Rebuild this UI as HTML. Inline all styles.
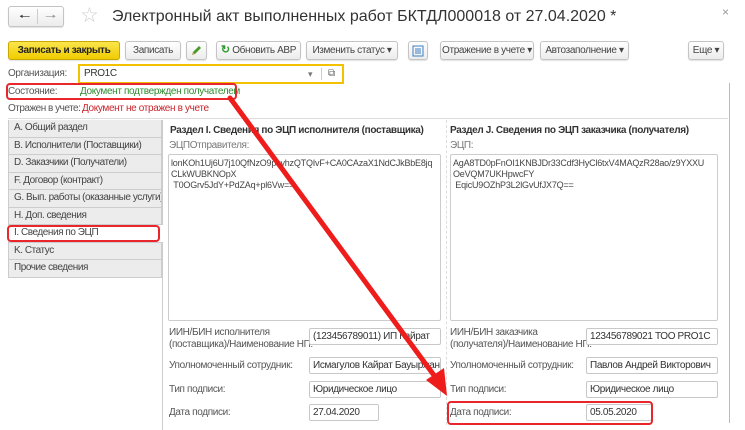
<!DOCTYPE html>
<html><head><meta charset="utf-8"><style>
*{box-sizing:border-box;margin:0;padding:0}
body{width:745px;height:430px;background:#fff;font-family:"Liberation Sans",Arial,sans-serif;font-size:10px;letter-spacing:-0.35px;color:#444;position:relative;overflow:hidden}
.a{position:absolute;white-space:nowrap}
.btn{position:absolute;height:19px;border:1px solid #c4c4c4;border-radius:3px;background:linear-gradient(#fff,#ececec);font-size:10px;color:#444;line-height:17px;text-align:center;white-space:nowrap;box-shadow:0 1px 1px rgba(0,0,0,.12)}
.tab{position:absolute;left:8px;width:154px;height:17.5px;border:1px solid #ccc;border-top:none;background:#ececec;padding-left:5px;line-height:16px;color:#444;white-space:nowrap;letter-spacing:-0.45px;overflow:hidden}
.fld{position:absolute;height:17px;border:1px solid #c8c8c8;border-radius:2px;background:#fff;padding-left:3px;line-height:15px;color:#333;overflow:hidden;white-space:nowrap}
.lbl{position:absolute;color:#555;white-space:nowrap}
.ta{position:absolute;border:1px solid #ccc;border-radius:2px;padding:3px 2px;line-height:11px;color:#444;font-size:9px;letter-spacing:-0.2px;white-space:nowrap;overflow:hidden}
</style></head><body>
<div class="btn" style="left:8px;top:6px;width:56px;height:21px;line-height:19px"><span style="position:absolute;left:10px;font-size:13px;color:#333">&#129040;</span><span style="position:absolute;left:28px;top:2px;width:1px;height:15px;background:#ccc"></span><span style="position:absolute;left:36px;font-size:13px;color:#999">&#129042;</span></div>
<div class="a" style="left:80px;top:3px;font-size:21px;color:#ccc">☆</div>
<div class="a" style="left:112px;top:8px;font-size:16px;letter-spacing:0;color:#333">Электронный акт выполненных работ БКТДЛ000018 от 27.04.2020 *</div>
<div class="a" style="left:722px;top:5px;font-size:12px;color:#999">×</div>
<div class="btn" style="left:8px;top:41px;width:112px;background:linear-gradient(#fbe54c,#f0cc00);border-color:#c9a800;color:#222;font-weight:bold">Записать и закрыть</div>
<div class="btn" style="left:125px;top:41px;width:56px">Записать</div>
<div class="btn" style="left:186px;top:41px;width:21px"><svg width="13" height="13" viewBox="0 0 13 13" style="margin-top:2px"><path d="M2 11l1-3 6-6 2 2-6 6z" fill="#4a9a2a"/><path d="M2 11l1-3 2 2z" fill="#c9a26a"/></svg></div>
<div class="btn" style="left:216px;top:41px;width:85px"><span style="color:#2c9a2c;font-weight:bold;font-size:11px">↻</span> Обновить АВР</div>
<div class="btn" style="left:306px;top:41px;width:92px">Изменить статус ▾</div>
<div class="btn" style="left:408px;top:41px;width:20px"><svg width="12" height="12" viewBox="0 0 12 12" style="margin-top:3px"><rect x="1" y="1" width="10" height="10" fill="none" stroke="#3c7fc4"/><path d="M3 4h6M3 6h6M3 8h6" stroke="#3c7fc4"/></svg></div>
<div class="btn" style="left:440px;top:41px;width:94px">Отражение в учете ▾</div>
<div class="btn" style="left:540px;top:41px;width:89px">Автозаполнение ▾</div>
<div class="btn" style="left:688px;top:41px;width:36px">Еще ▾</div>
<div class="lbl" style="left:8px;top:68px">Организация:</div>
<div class="a" style="left:78px;top:64px;width:266px;height:20px;border:2px solid #f2c200;background:#fff;padding-left:4px;line-height:16px;color:#333">PRO1C<span style="position:absolute;left:228px;top:0;color:#777;font-size:9px">▾</span><span style="position:absolute;left:241px;top:2px;width:1px;height:12px;background:#ccc"></span><span style="position:absolute;left:248px;top:0;color:#666;font-size:10px">⧉</span></div>
<div class="lbl" style="left:8px;top:86px">Состояние:</div>
<div class="a" style="left:80px;top:86px;color:#2e8b2e">Документ подтвержден получателем</div>
<div class="a" style="left:6px;top:83px;width:231px;height:17px;border:2px solid #e8262b;border-radius:4px"></div>
<div class="lbl" style="left:8px;top:103px;letter-spacing:-0.5px">Отражен в учете:</div>
<div class="a" style="left:82px;top:103px;color:#c8242b">Документ не отражен в учете</div>
<div class="a" style="left:8px;top:118px;width:720px;height:1px;background:#ddd"></div>
<div class="a" style="left:729px;top:83px;width:1px;height:340px;background:#bbb"></div>
<div class="a" style="left:8px;top:120px;width:154px;height:1px;background:#ccc"></div>
<div class="tab" style="top:120px">А. Общий раздел</div>
<div class="tab" style="top:137.5px">В. Исполнители (Поставщики)</div>
<div class="tab" style="top:155px">D. Заказчики (Получатели)</div>
<div class="tab" style="top:172.5px">F. Договор (контракт)</div>
<div class="tab" style="top:190px">G. Вып. работы (оказанные услуги)</div>
<div class="tab" style="top:207.5px">H. Доп. сведения</div>
<div class="tab" style="top:225px;background:#fff;border-right:none">I. Сведения по ЭЦП</div>
<div class="tab" style="top:242.5px">K. Статус</div>
<div class="tab" style="top:260px">Прочие сведения</div>
<div class="a" style="left:7px;top:225px;width:153px;height:17px;border:2px solid #e8262b;border-radius:4px"></div>
<div class="a" style="left:162px;top:120px;width:1px;height:105px;background:#ccc"></div>
<div class="a" style="left:162px;top:242px;width:1px;height:188px;background:#ccc"></div>
<div class="a" style="left:446px;top:120px;width:0;height:305px;border-left:1px dashed #ddd"></div>
<div class="a" style="left:170px;top:125px;font-weight:bold;color:#333">Раздел I. Сведения по ЭЦП исполнителя (поставщика)</div>
<div class="lbl" style="left:169px;top:140px;color:#777">ЭЦПОтправителя:</div>
<div class="ta" style="left:168px;top:154px;width:273px;height:167px">lonKOh1Uj6U7j10QfNzO9pcyhzQTQIvF+CA0CAzaX1NdCJkBbE8jq<br>CLkWUBKNOpX<br>&nbsp;T0OGrv5JdY+PdZAq+pl6Vw==</div>
<div class="a" style="left:450px;top:125px;font-weight:bold;color:#333">Раздел J. Сведения по ЭЦП заказчика (получателя)</div>
<div class="lbl" style="left:450px;top:140px;color:#777">ЭЦП:</div>
<div class="ta" style="left:450px;top:154px;width:268px;height:167px">AgA8TD0pFnOI1KNBJDr33Cdf3HyCl6txV4MAQzR28ao/z9YXXU<br>OeVQM7UKHpwcFY<br>&nbsp;EqicU9OZhP3L2lGvUfJX7Q==</div>
<div class="lbl" style="left:169px;top:327px;line-height:12px">ИИН/БИН исполнителя<br>(поставщика)/Наименование НП:</div>
<div class="fld" style="left:309px;top:328px;width:132px">(123456789011) ИП Кайрат</div>
<div class="lbl" style="left:169px;top:360px">Уполномоченный сотрудник:</div>
<div class="fld" style="left:309px;top:357px;width:132px">Исмагулов Кайрат Бауыржанов</div>
<div class="lbl" style="left:169px;top:384px">Тип подписи:</div>
<div class="fld" style="left:309px;top:381px;width:132px">Юридическое лицо</div>
<div class="lbl" style="left:169px;top:407px">Дата подписи:</div>
<div class="fld" style="left:309px;top:404px;width:70px">27.04.2020</div>
<div class="lbl" style="left:450px;top:327px;line-height:12px">ИИН/БИН заказчика<br>(получателя)/Наименование НП:</div>
<div class="fld" style="left:586px;top:328px;width:132px">123456789021 ТОО PRO1C</div>
<div class="lbl" style="left:450px;top:360px">Уполномоченный сотрудник:</div>
<div class="fld" style="left:586px;top:357px;width:132px">Павлов Андрей Викторович</div>
<div class="lbl" style="left:450px;top:384px">Тип подписи:</div>
<div class="fld" style="left:586px;top:381px;width:132px">Юридическое лицо</div>
<div class="lbl" style="left:450px;top:407px">Дата подписи:</div>
<div class="fld" style="left:586px;top:404px;width:66px">05.05.2020</div>
<div class="a" style="left:447px;top:401px;width:206px;height:24px;border:2px solid #e8262b;border-radius:4px"></div>
<svg class="a" style="left:0;top:0" width="745" height="430"><line x1="230" y1="98" x2="436" y2="378" stroke="#ef1c1c" stroke-width="5" stroke-linecap="round"/><polygon points="447,396 426,380 444,368" fill="#ef1c1c"/></svg>
</body></html>
